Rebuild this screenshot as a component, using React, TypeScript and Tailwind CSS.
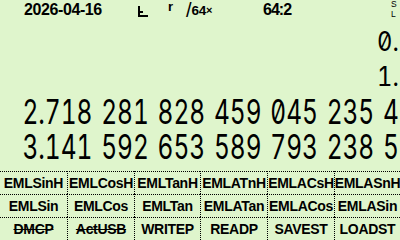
const TOP = ["EMLSinH", "EMLCosH", "EMLTanH", "EMLATnH", "EMLACsH", "EMLASnH"];
const MID = ["EMLSin", "EMLCos", "EMLTan", "EMLATan", "EMLACos", "EMLASin"];
const BOT = [
  { label: "DMCP", off: true },
  { label: "ActUSB", off: true },
  { label: "WRITEP", off: false },
  { label: "READP", off: false },
  { label: "SAVEST", off: false },
  { label: "LOADST", off: false },
];

function Key({ label, first, off }: { label: string; first: boolean; off?: boolean }) {
  return (
    <div
      className={`flex h-[23px] items-center justify-center overflow-visible whitespace-nowrap border-t border-dotted border-black ${
        first ? "" : "border-l"
      }`}
    >
      <span className={`text-[14px] font-bold leading-none tracking-[-0.3px] ${off ? "line-through decoration-[1px]" : ""}`}>
        {label}
      </span>
    </div>
  );
}

export default function App() {
  return (
    <div className="h-[240px] w-[400px] overflow-hidden bg-[#dff5cc] font-['Liberation_Sans',sans-serif] text-black">
      {/* status bar */}
      <div className="flex h-[20px] items-start pl-[24px]">
        <span className="mt-[2px] w-[114px] shrink-0 text-[16px] font-bold leading-none tracking-[-0.4px]">2026-04-16</span>
        <span className="w-[30px] shrink-0 pt-[6px]">
          <svg width="10" height="11" viewBox="0 0 10 11" className="block">
            <path d="M1 0V10H10M1 6H5" fill="none" stroke="black" strokeWidth="2" />
          </svg>
        </span>
        <span className="w-[18px] shrink-0 text-[13px] font-bold leading-none">r</span>
        <span className="flex w-[77px] shrink-0 items-start">
          <span className="text-[20px] leading-none">/</span>
          <span className="mt-[4px] text-[13.5px] font-bold leading-none tracking-[-0.3px]">64</span>
          <span className="mt-[5px] text-[11px] font-bold leading-none">×</span>
        </span>
        <span className="mt-[2px] w-[128px] shrink-0 text-[16px] font-bold leading-none tracking-[-1px]">64:2</span>
        <span className="flex flex-col text-[8.5px] leading-none">
          <span>S</span>
          <span className="mt-[1.5px]">L</span>
        </span>
      </div>

      {/* stack */}
      <div className="flex h-[151px] flex-col pr-[1px] pt-[8px] font-['Inter',sans-serif] font-normal tabular-nums slashed-zero">
        <div className="flex h-[35px] justify-end">
          <span className="origin-right scale-x-[0.88] whitespace-nowrap text-[27px] leading-none">0.</span>
        </div>
        <div className="flex h-[32px] justify-end">
          <span className="origin-right scale-x-[0.88] whitespace-nowrap text-[27px] leading-none">1.</span>
        </div>
        <div className="flex h-[35px] justify-end">
          <span className="shrink-0 origin-right scale-x-[0.72] whitespace-nowrap text-[34px] leading-none [word-spacing:3px]">
            2.718 281 828 459 045 235 4
          </span>
        </div>
        <div className="flex h-[41px] justify-end">
          <span className="shrink-0 origin-right scale-x-[0.72] whitespace-nowrap text-[34px] leading-none [word-spacing:3px]">
            3.141 592 653 589 793 238 5
          </span>
        </div>
      </div>

      {/* softkeys */}
      <div className="grid grid-cols-[67px_67px_66px_67px_67px_66px]">
        {TOP.map((l, i) => (
          <Key key={l} label={l} first={i === 0} />
        ))}
        {MID.map((l, i) => (
          <Key key={l} label={l} first={i === 0} />
        ))}
        {BOT.map((k, i) => (
          <Key key={k.label} label={k.label} first={i === 0} off={k.off} />
        ))}
      </div>
    </div>
  );
}
